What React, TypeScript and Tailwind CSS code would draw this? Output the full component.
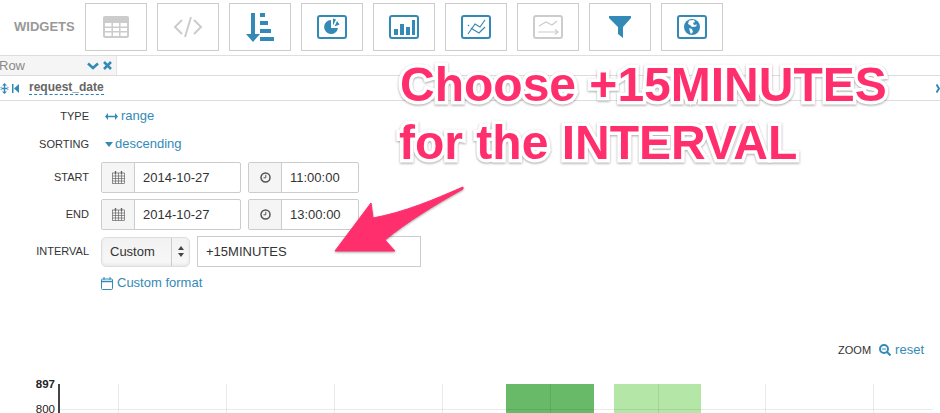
import React from "react";

const BLUE = "#338ab7";
const GREY = "#ccc";

function Frame({ c, children }: { c: string; children?: React.ReactNode }) {
  return (
    <svg width="30" height="24" viewBox="0 0 30 24" fill="none">
      <rect x="1" y="1" width="28" height="22" rx="2" stroke={c} strokeWidth="2" />
      {children}
    </svg>
  );
}

const icons: React.ReactNode[] = [
  <svg key="t" width="26" height="22" viewBox="0 0 26 22">
    <path fill={GREY} fillRule="evenodd" d="M2 0h22a2 2 0 0 1 2 2v18a2 2 0 0 1-2 2H2a2 2 0 0 1-2-2V2a2 2 0 0 1 2-2zM2 7v3.500h6.500V7zm8 0v3.500h6V7zm7.500 0v3.500h6.500V7zM2 12v3h6.500v-3zm8 0v3h6v-3zm7.500 0v3h6.500v-3zM2 16.500V20h6.500v-3.500zm8 0V20h6v-3.500zm7.500 0V20h6.500v-3.500z" />
  </svg>,
  <svg key="c" width="30" height="22" viewBox="0 0 30 22" fill="none" stroke={GREY} strokeWidth="2">
    <path d="M9 4 2 11l7 7M21 4l7 7-7 7M18 1l-6 20" />
  </svg>,
  <svg key="s" width="28" height="29" viewBox="0 0 28 29" fill={BLUE}>
    <path d="M5 0h4v21h5l-7 8-7-8h5z" />
    <rect x="14" y="0" width="5" height="4" />
    <rect x="14" y="8" width="8" height="4" />
    <rect x="14" y="16" width="11" height="4" />
    <rect x="14" y="24" width="14" height="4" />
  </svg>,
  <Frame key="p" c={BLUE}>
    <path fill={BLUE} d="M14 5a7 7 0 1 0 7 8h-7zM16 3.500l3 1-3 6zM20 6l2.500 3.500-5 2z" />
  </Frame>,
  <Frame key="b" c={BLUE}>
    <path fill={BLUE} d="M5 14h4v6H5zM11 9h4v11h-4zM17 12h4v8h-4zM23 5h3v15h-3z" />
  </Frame>,
  <Frame key="l" c={BLUE}>
    <path stroke={BLUE} strokeWidth="1.200" d="M7 19 14 9l5 3 5-7M7 10l1 1M10 13l3 2 5 3 6-6" />
  </Frame>,
  <Frame key="g" c={GREY}>
    <path stroke={GREY} strokeWidth="1.200" d="M6 11l7-4 6 3 5-4M5 17h19M22 14.500l3 2.500-3 2.500" />
  </Frame>,
  <svg key="f" width="22" height="22" viewBox="0 0 22 22" fill={BLUE}>
    <path d="M0 0h22v2l-8 9v11l-5-4v-7L0 2z" />
  </svg>,
  <Frame key="w" c={BLUE}>
    <circle cx="15" cy="12" r="8" fill={BLUE} />
    <path fill="#fff" d="M12 5.500l5-.5 1 2-2 1 1 2 3-.5-1 2-4 .5-2-2-2-1zM12 13l3 1 1 3-2 2-1-2z" />
  </Frame>,
];

function Cal({ c = "#666" }: { c?: string }) {
  return (
    <svg width="13" height="13" viewBox="0 0 13 13" fill="none" stroke={c} strokeWidth="0.700">
      <rect x="0.500" y="2" width="12" height="10.500" />
      <path d="M.5 5h12M.5 7.500h12M.5 10h12M3.500 2v10.500M6.500 2v10.500M9.500 2v10.500" />
      <path strokeWidth="1.400" d="M3.500 0v3M9.500 0v3" />
    </svg>
  );
}

function Clock() {
  return (
    <svg width="11" height="11" viewBox="0 0 11 11" fill="none" stroke="#555">
      <circle cx="5.500" cy="5.500" r="4.500" strokeWidth="1.500" />
      <path d="M5.800 2.800v3H3.500" strokeWidth="1" />
    </svg>
  );
}

function Row({ label, h, mt, children }: { label: string; h: string; mt: string; children: React.ReactNode }) {
  return (
    <div className={`flex items-center ${h} ${mt}`}>
      <div className="w-[89px] text-right text-[11px] text-[#333]">{label}</div>
      <div className="ml-3 flex items-center">{children}</div>
    </div>
  );
}

function Addon({ icon, value, w }: { icon: React.ReactNode; value: string; w: string }) {
  return (
    <div className="flex h-[31px] items-stretch rounded-[2px] border border-[#ccc] text-[13px] text-[#333]">
      <div className="flex w-[33px] items-center justify-center border-r border-[#ccc] bg-[#f5f5f5]">{icon}</div>
      <div className={`flex items-center pl-2 ${w}`}>{value}</div>
    </div>
  );
}

const gridX = [118, 226, 334, 442, 550, 658, 765, 873];

export default function App() {
  return (
    <div className="relative h-[413px] w-[940px] overflow-hidden bg-white font-['Liberation_Sans',Arial,sans-serif]">
      <div className="flex h-[55px] items-start pl-[14px] pt-[3px]">
        <div className="mt-[15px] w-[71px] text-[13px] font-bold leading-[18px] text-[#999]">WIDGETS</div>
        <div className="flex gap-[10px]">
          {icons.map((ic, i) => (
            <div key={i} className="flex h-[48px] w-[62px] items-center justify-center border border-[#ccc]">
              {ic}
            </div>
          ))}
        </div>
      </div>

      <div className="h-[21px] border-y border-[#ddd]">
        <div className="flex h-full w-[117px] items-center justify-between border-r border-[#e5e5e5] bg-[#f5f5f5] pr-[4px]">
          <span className="ml-[-1px] text-[13px] text-[#888]">Row</span>
          <span className="flex items-center gap-[4px]">
            <svg width="12" height="8" viewBox="0 0 12 8" fill="none" stroke={BLUE} strokeWidth="2.500"><path d="M1 1.500l5 4.500 5-4.500" /></svg>
            <svg width="9" height="9" viewBox="0 0 9 9" fill="none" stroke={BLUE} strokeWidth="2.500"><path d="M1 1l7 7M8 1 1 8" /></svg>
          </span>
        </div>
      </div>

      <div className="flex h-[25px] items-center justify-between border-b border-[#ddd]">
        <div className="flex items-center">
          <svg width="9" height="11" viewBox="0 0 9 11" fill={BLUE} className="mr-[2px]"><path d="M4.500 0 7 2.500H5.200v2.300H9L7.500 3.500v4L9 6.200H5.200v2.300H7L4.500 11 2 8.500h1.800V6.200H0l1.500 1.300v-4L0 4.800h3.800V2.500H2z" /></svg>
          <svg width="7" height="9" viewBox="0 0 7 9" fill={BLUE} className="ml-[1px]"><path d="M0 0h1.500v9H0zM7 0v9L2 4.500z" /></svg>
          <span className="ml-[10px] border-b border-dashed border-[#2a7fb8] text-[12px] font-bold leading-[13px] text-[#666]">request_date</span>
        </div>
        <svg width="4" height="9" viewBox="0 0 4 9" fill="none" stroke={BLUE} strokeWidth="2"><path d="M0.500 0.500l2.500 4-2.500 4" /></svg>
      </div>

      <Row label="TYPE" h="h-[18px]" mt="mt-[6px]">
        <span className="flex items-center gap-[3px] text-[13px] text-[#338ab7]">
          <svg width="13" height="7" viewBox="0 0 13 7" fill={BLUE} className="ml-[4px]"><path d="M3 0v2.800h7V0l3 3.500L10 7V4.200H3V7L0 3.500z" /></svg>
          range
        </span>
      </Row>
      <Row label="SORTING" h="h-[18px]" mt="mt-[10px]">
        <span className="flex items-center gap-[2px] text-[13px] text-[#338ab7]">
          <svg width="8" height="5" viewBox="0 0 8 5" fill={BLUE} className="ml-[4px]"><path d="M0 0h8L4 5z" /></svg>
          descending
        </span>
      </Row>
      <Row label="START" h="h-[31px]" mt="mt-[9px]">
        <Addon icon={<Cal />} value="2014-10-27" w="w-[105px]" />
        <div className="ml-[7px]"><Addon icon={<Clock />} value="11:00:00" w="w-[76px]" /></div>
      </Row>
      <Row label="END" h="h-[31px]" mt="mt-[6px]">
        <Addon icon={<Cal />} value="2014-10-27" w="w-[105px]" />
        <div className="ml-[7px]"><Addon icon={<Clock />} value="13:00:00" w="w-[76px]" /></div>
      </Row>
      <Row label="INTERVAL" h="h-[31px]" mt="mt-[6px]">
        <div className="flex h-[30px] w-[89px] items-stretch rounded-[5px] border border-[#ddd] bg-gradient-to-b from-[#f2f2f2] to-[#f8f8f8] text-[13px] text-[#333] shadow-[inset_0_-2px_3px_rgba(0,0,0,0.06)]">
          <div className="flex flex-1 items-center border-r border-[#ccc] pl-[8px]">Custom</div>
          <div className="flex w-[17px] items-center justify-center">
            <svg width="6" height="11" viewBox="0 0 6 11" fill="#444"><path d="M3 0l3 4H0zM3 11 0 7h6z" /></svg>
          </div>
        </div>
        <div className="ml-[7px] flex h-[31px] w-[224px] items-center border border-[#ccc] pl-2 text-[13px] text-[#333]">+15MINUTES</div>
      </Row>
      <div className="ml-[101px] mt-[8px] flex h-[16px] items-center gap-[4px] text-[13px] text-[#338ab7]">
        <svg width="12" height="13" viewBox="0 0 12 13" fill="none" stroke={BLUE}><rect x="0.500" y="2" width="11" height="10.500" rx="1" /><path d="M.5 4.500h11" strokeWidth="1.500" /><path d="M3 0v3M9 0v3" /></svg>
        Custom format
      </div>

      <div className="mt-[51px] flex h-[16px] items-center justify-end gap-[8px] pr-[16px]">
        <span className="text-[11px] text-[#333]">ZOOM</span>
        <span className="flex items-center gap-[4px] text-[13px] text-[#338ab7]">
          <svg width="12" height="12" viewBox="0 0 12 12" fill="none" stroke={BLUE} strokeWidth="2"><circle cx="5" cy="5" r="4" /><path d="M8 8l3.500 3.500" /><path d="M3 5h4" strokeWidth="1" /></svg>
          reset
        </span>
      </div>

      <svg width="940" height="55" viewBox="0 358 940 55" className="block">
        <rect x="506" y="384" width="88" height="29" fill="#68b968" />
        <rect x="614" y="384" width="87" height="29" fill="#b4e6a8" />
        {gridX.map((x) => (
          <line key={x} x1={x + 0.5} x2={x + 0.5} y1="384" y2="413" stroke="#000" strokeOpacity="0.08" />
        ))}
        <line x1="60" x2="933" y1="409.500" y2="409.500" stroke="#000" strokeOpacity="0.08" />
        <line x1="59" x2="59" y1="384" y2="413" stroke="#444" strokeWidth="2" />
        <text x="55" y="388" textAnchor="end" fontSize="11.500" fontWeight="700" fill="#222">897</text>
        <text x="55" y="413" textAnchor="end" fontSize="11.500" fill="#222">800</text>
      </svg>

      <div className="absolute left-[400px] top-[56px] whitespace-nowrap text-[48px] font-bold leading-[58px] text-[#ff2f6d] [-webkit-text-stroke:7px_white] [paint-order:stroke_fill] drop-shadow-[0_1px_1px_rgba(0,0,0,0.35)]">
        <div>Choose +15MINUTES</div>
        <div className="ml-[-1px]">for the INTERVAL</div>
      </div>

      <svg width="150" height="90" viewBox="0 0 150 90" className="absolute left-[325px] top-[180px] drop-shadow-[0_1px_1px_rgba(0,0,0,0.35)]">
        <path fill="#ff2f6d" stroke="#ff2f6d" strokeWidth="1" strokeLinejoin="round" d="M10 71 46 23l2 15c32-6 60-18 90-31l0 2c-30 17-56 33-78 51l10 11z" />
      </svg>
    </div>
  );
}
